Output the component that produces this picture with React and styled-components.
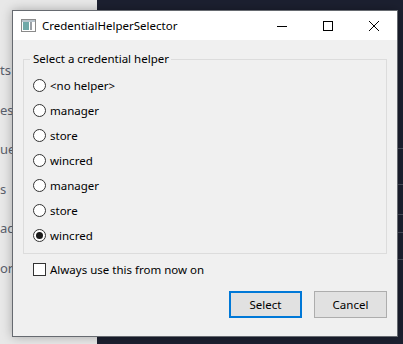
import React from 'react';
import styled, { createGlobalStyle } from 'styled-components';

const GlobalStyle = createGlobalStyle`
    html, body {
        margin: 0;
        padding: 0;
        background: #1c2030;
    }
    * { box-sizing: border-box; }
`;

const Screen = styled.div`
    position: relative;
    width: 403px;
    height: 344px;
    overflow: hidden;
    display: flex;
    font-family: "Segoe UI", "Noto Sans", sans-serif;
`;

const SidePane = styled.div`
    width: 97px;
    background: #e8e8e8;
    display: flex;
    flex-direction: column;
    padding-top: 61px;
`;

const SideItem = styled.div`
    height: 39.5px;
    font-size: 13px;
    line-height: 18px;
    color: #5a606c;
    white-space: nowrap;
`;

const DarkPane = styled.div`
    flex: 1;
    background: #1c2030;
    display: flex;
    flex-direction: column;
    align-items: flex-end;
    padding-top: 148px;
`;

const Separator = styled.div`
    width: 6px;
    height: ${p => p.$h}px;
    border-top: 1px solid #4a4f5c;
`;

const Dialog = styled.div`
    position: absolute;
    left: 12px;
    top: 10px;
    width: 386px;
    height: 327px;
    border: 1px solid #666a70;
    background: #f0f0f0;
    display: flex;
    flex-direction: column;
    box-shadow: 0 0 10px rgba(0, 0, 0, 0.28);
    color: #000;
    font-size: 11.5px;
`;

const TitleBar = styled.div`
    height: 29px;
    background: #fff;
    display: flex;
    align-items: center;
    flex-shrink: 0;
`;

const AppIcon = styled.svg`
    width: 15px;
    height: 13px;
    margin-left: 8px;
    margin-right: 6px;
`;

const Title = styled.div`
    flex: 1;
    font-size: 11.5px;
    line-height: 16px;
    padding-top: 1px;
`;

const CaptionButton = styled.div`
    width: 46px;
    height: 29px;
    display: flex;
    align-items: center;
    justify-content: center;
`;

const Body = styled.div`
    flex: 1;
    padding: 11px 10px 0 10px;
    display: flex;
    flex-direction: column;
`;

const Group = styled.fieldset`
    margin: 0;
    padding: 6px 0 5px 6px;
    border: 1px solid #dcdcdc;
    min-width: 0;
`;

const Legend = styled.legend`
    padding: 0 2px 0 3px;
    margin-left: 0;
    font-size: 11.5px;
    line-height: 16px;
`;

const OptionRow = styled.label`
    display: flex;
    align-items: center;
    height: 25px;
    padding-left: 3px;
    gap: 4px;
`;

const Radio = styled.span`
    width: 13px;
    height: 13px;
    border-radius: 50%;
    border: 1px solid #333;
    background: #fff;
    display: flex;
    align-items: center;
    justify-content: center;
    flex-shrink: 0;

    &::after {
        content: "";
        width: 7px;
        height: 7px;
        border-radius: 50%;
        background: ${p => (p.$checked ? '#1a1a1a' : 'transparent')};
    }
`;

const CheckRow = styled.label`
    display: flex;
    align-items: center;
    gap: 4px;
    height: 16px;
    margin-top: 7px;
    padding-left: 10px;
`;

const CheckBox = styled.span`
    width: 13px;
    height: 13px;
    border: 1px solid #333;
    background: #fff;
    flex-shrink: 0;
`;

const Buttons = styled.div`
    display: flex;
    justify-content: flex-end;
    gap: 12px;
    margin-top: 14px;
`;

const Button = styled.div`
    width: 73px;
    height: 27px;
    display: flex;
    align-items: center;
    justify-content: center;
    background: #e1e1e1;
    border: ${p => (p.$default ? '2px solid #0078d7' : '1px solid #adadad')};
`;

const helpers = ['<no helper>', 'manager', 'store', 'wincred', 'manager', 'store', 'wincred'];
const sideItems = ['ts', 'es', 'ue', 's', 'ac', 'ory'];

const App = () => {
    const selected = 6;
    return (
        <Screen>
            <GlobalStyle />
            <SidePane>
                {sideItems.map((s, i) => (
                    <SideItem key={i}>{s}</SideItem>
                ))}
            </SidePane>
            <DarkPane>
                <Separator $h={36} />
                <Separator $h={30} />
                <Separator $h={18} />
                <Separator $h={27} />
                <Separator $h={42} />
            </DarkPane>

            <Dialog>
                <TitleBar>
                    <AppIcon viewBox="0 0 15 13">
                        <rect x="0.5" y="0.5" width="14" height="12" fill="#fff" stroke="#8a8a8a" />
                        <rect x="1" y="1" width="13" height="2" fill="#b8c4cc" />
                        <rect x="2" y="3" width="6" height="8" fill="#6fa8a8" />
                        <rect x="9" y="3" width="2" height="8" fill="#9aa0a6" />
                    </AppIcon>
                    <Title>CredentialHelperSelector</Title>
                    <CaptionButton>
                        <svg width="10" height="10" viewBox="0 0 10 10">
                            <line x1="0" y1="5.5" x2="10" y2="5.5" stroke="#000" strokeWidth="1" />
                        </svg>
                    </CaptionButton>
                    <CaptionButton>
                        <svg width="10" height="10" viewBox="0 0 10 10">
                            <rect x="0.5" y="0.5" width="9" height="9" fill="none" stroke="#000" strokeWidth="1" />
                        </svg>
                    </CaptionButton>
                    <CaptionButton>
                        <svg width="10" height="10" viewBox="0 0 10 10">
                            <path d="M0 0 L10 10 M10 0 L0 10" stroke="#000" strokeWidth="1" />
                        </svg>
                    </CaptionButton>
                </TitleBar>

                <Body>
                    <Group>
                        <Legend>Select a credential helper</Legend>
                        {helpers.map((h, i) => (
                            <OptionRow key={i}>
                                <Radio $checked={i === selected} />
                                {h}
                            </OptionRow>
                        ))}
                    </Group>

                    <CheckRow>
                        <CheckBox />
                        Always use this from now on
                    </CheckRow>

                    <Buttons>
                        <Button $default>Select</Button>
                        <Button>Cancel</Button>
                    </Buttons>
                </Body>
            </Dialog>
        </Screen>
    );
};

export default App;
